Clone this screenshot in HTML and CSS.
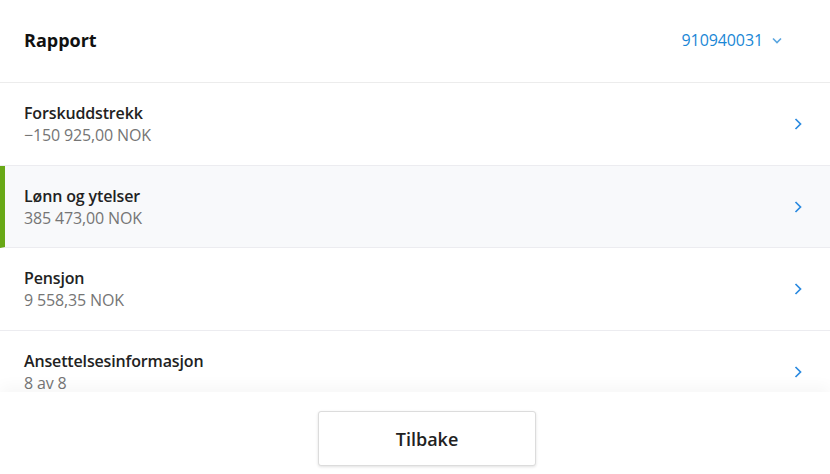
FILE: index.html
```html
<!DOCTYPE html>
<html lang="no">
<head>
<meta charset="utf-8">
<link rel="stylesheet" href="styles.css">
</head>
<body>
<div class="app">
  <header class="header">
    <h1 class="title">Rapport</h1>
    <button class="org">910940031
      <svg class="chev-down" width="10" height="7" viewBox="0 0 10 7"><path d="M1 1.5 L5 5.5 L9 1.5" fill="none" stroke="#5aa6e0" stroke-width="1.6"/></svg>
    </button>
  </header>
  <main class="list">
    <a class="row">
      <div class="row-text"><div class="row-title">Forskuddstrekk</div><div class="row-sub">−150 925,00 NOK</div></div>
      <svg class="chev" width="8" height="12" viewBox="0 0 8 12"><path d="M1.5 1 L6.5 6 L1.5 11" fill="none" stroke="#2a8ae0" stroke-width="1.7"/></svg>
    </a>
    <a class="row row-active">
      <div class="row-text"><div class="row-title">Lønn og ytelser</div><div class="row-sub">385 473,00 NOK</div></div>
      <svg class="chev" width="8" height="12" viewBox="0 0 8 12"><path d="M1.5 1 L6.5 6 L1.5 11" fill="none" stroke="#2a8ae0" stroke-width="1.7"/></svg>
    </a>
    <a class="row">
      <div class="row-text"><div class="row-title">Pensjon</div><div class="row-sub">9 558,35 NOK</div></div>
      <svg class="chev" width="8" height="12" viewBox="0 0 8 12"><path d="M1.5 1 L6.5 6 L1.5 11" fill="none" stroke="#2a8ae0" stroke-width="1.7"/></svg>
    </a>
    <a class="row">
      <div class="row-text"><div class="row-title">Ansettelsesinformasjon</div><div class="row-sub">8 av 8</div></div>
      <svg class="chev" width="8" height="12" viewBox="0 0 8 12"><path d="M1.5 1 L6.5 6 L1.5 11" fill="none" stroke="#2a8ae0" stroke-width="1.7"/></svg>
    </a>
  </main>
  <footer class="footer">
    <button class="back">Tilbake</button>
  </footer>
</div>
</body>
</html>
```
FILE: styles.css
```css
* { box-sizing: border-box; }
html, body { margin: 0; padding: 0; }
body {
  font-family: "Open Sans", "Noto Sans", sans-serif;
  background: #fff;
  color: #222;
  width: 830px;
  height: 474px;
  overflow: hidden;
}
.app {
  display: flex;
  flex-direction: column;
  height: 474px;
}
.header {
  height: 83px;
  flex: none;
  display: flex;
  align-items: center;
  justify-content: space-between;
  padding: 0 48px 0 24px;
  border-bottom: 1px solid #ececec;
}
.title {
  margin: 0;
  font-size: 18px;
  font-weight: 700;
  color: #111;
  line-height: 24px;
  padding-bottom: 2px;
}
.org {
  border: none;
  background: none;
  padding: 0;
  font-family: inherit;
  font-size: 16px;
  letter-spacing: -0.1px;
  color: #1a87d6;
  display: flex;
  align-items: center;
  gap: 9px;
  padding-bottom: 2px;
}
.chev-down { margin-top: 1px; }
.list {
  flex: 1;
  overflow: hidden;
  position: relative;
}
.row {
  display: flex;
  align-items: center;
  justify-content: space-between;
  height: 82.5px;
  padding: 0 28px 0 24px;
  border-bottom: 1px solid #ececf0;
  position: relative;
  background: #fff;
}
.row-active {
  background: #f8f9fb;
  border-left: 5px solid #68a816;
  padding-left: 19px;
}
.row-text { padding-top: 1px; }
.row-title {
  font-size: 16px;
  font-weight: 600;
  line-height: 22px;
  letter-spacing: -0.15px;
  color: #222;
}
.row-sub {
  font-size: 16px;
  line-height: 22px;
  letter-spacing: -0.15px;
  color: #757575;
}
.chev { margin-top: 1px; }
.footer {
  flex: none;
  height: 82px;
  display: flex;
  justify-content: center;
  align-items: flex-start;
  padding: 19px 0 0 24px;
  background: #fff;
  box-shadow: 0 -6px 14px rgba(0, 0, 0, 0.035);
  position: relative;
  z-index: 1;
}
.back {
  width: 218px;
  height: 55px;
  background: #fff;
  border: 1px solid #dcdcdc;
  border-radius: 3px;
  box-shadow: 0 1px 3px rgba(0, 0, 0, 0.12);
  font-family: inherit;
  font-size: 18px;
  font-weight: 600;
  color: #222;
}
```
